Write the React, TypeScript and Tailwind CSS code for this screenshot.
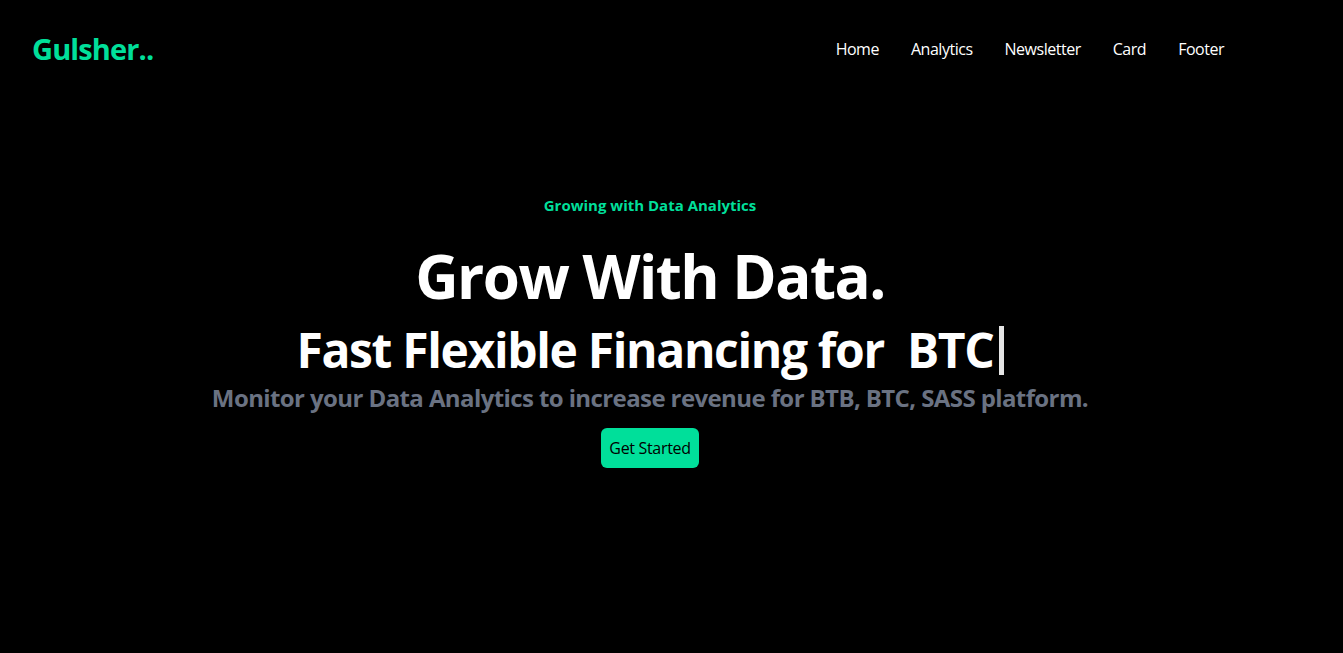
import React from "react";

const font = { fontFamily: '"Open Sans", "Noto Sans", Arial, sans-serif' };

function Navbar() {
	return (
		<div className="flex h-24 items-center justify-between pl-8 pr-[103px] pt-[2px] text-white">
			<h1 className="text-[29px] font-bold tracking-[-0.03em] text-[#00df9a]">
				Gulsher..
			</h1>
			<ul className="flex tracking-[-0.03em]">
				<li className="px-4">Home</li>
				<li className="px-4">Analytics</li>
				<li className="px-4">Newsletter</li>
				<li className="px-4">Card</li>
				<li className="px-4">Footer</li>
			</ul>
		</div>
	);
}

function Hero() {
	return (
		<div className="w-[1300px] text-white">
			<div className="flex w-full flex-col items-center text-center">
				<p className="mt-[98px] text-[15px] font-bold text-[#00df9a]">
					Growing with Data Analytics
				</p>
				<h1 className="mt-[29px] text-6xl font-bold leading-none tracking-[-0.025em]">
					Grow With Data.
				</h1>
				<div className="mt-[20px] flex items-center justify-center text-5xl font-bold leading-none tracking-[-0.028em]">
					<p>Fast Flexible Financing for</p>
					<span className="pl-[23px]">BTC</span>
					{/* typing cursor */}
					<span className="ml-[5px] inline-block h-[49px] w-[5px] bg-[#e5e5e5]" />
				</div>
				<p className="mt-[7px] whitespace-nowrap text-2xl font-bold tracking-[-0.025em] text-gray-500">
					Monitor your Data Analytics to increase revenue for BTB, BTC, SASS
					platform.
				</p>
				<button className="mt-[14px] rounded-md bg-[#00df9a] px-2 py-2 tracking-[-0.02em] text-black">
					Get Started
				</button>
			</div>
		</div>
	);
}

export default function App() {
	return (
		<div className="min-h-screen w-full bg-black" style={font}>
			<Navbar />
			<Hero />
		</div>
	);
}
